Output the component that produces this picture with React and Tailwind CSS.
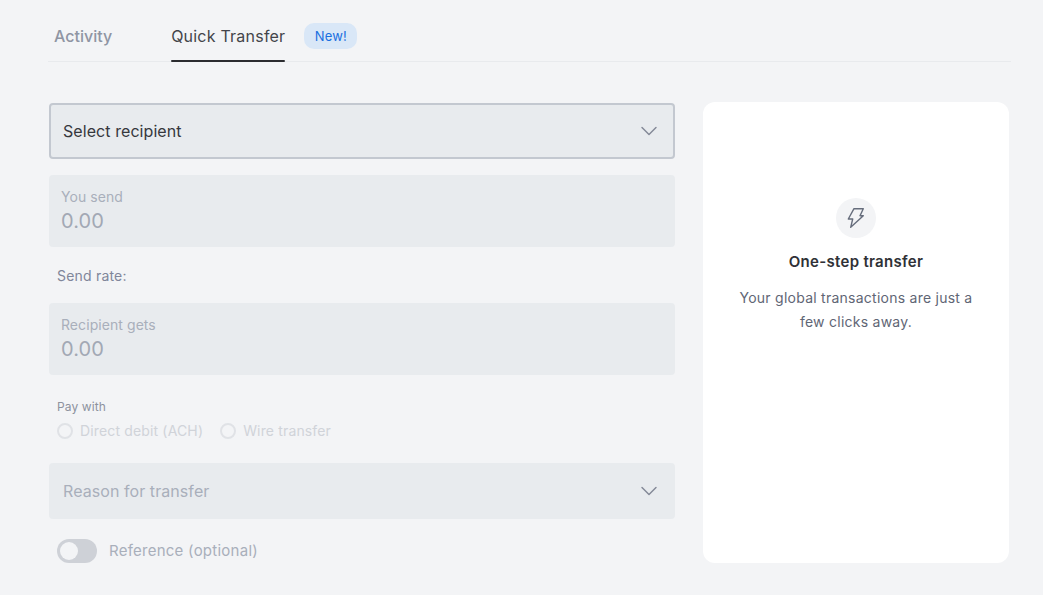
import { ChevronDown } from 'lucide-react';

function SelectBox({ label, active }) {
  return (
    <div
      className={`flex h-14 items-center justify-between rounded bg-[#e8ebee] ${
        active ? 'border-2 border-[#c3c8d0] pl-3 pr-[10px] text-[#36383d]' : 'pl-[14px] pr-3 text-[#a9afbb]'
      }`}
    >
      <span className="text-base leading-6 tracking-[0.07px]">{label}</span>
      <ChevronDown className="h-7 w-7 text-[#848a97]" strokeWidth={1.25} />
    </div>
  );
}

function AmountBox({ label }) {
  return (
    <div className="flex h-[72px] flex-col rounded bg-[#e8ebee] pl-3 pt-[13px]">
      <span className="text-sm leading-[18px] tracking-[0.07px] text-[#a9afbb]">{label}</span>
      <span className="mt-px text-xl leading-[28px] tracking-[0.1px] text-[#a2a8b4]">0.00</span>
    </div>
  );
}

function Radio({ label }) {
  return (
    <div className="flex items-center gap-[7px]">
      <span className="h-4 w-4 rounded-full border-2 border-[#e0e2e6]" />
      <span className="text-sm leading-5 tracking-[0.15px] text-[#d0d3d9]">{label}</span>
    </div>
  );
}

export default function App() {
  return (
    <div className="h-[595px] w-[1043px] overflow-hidden bg-[#f3f4f6] font-['Inter',sans-serif]">
      {/* Tabs */}
      <div className="ml-12 mr-8 flex h-[62px] items-stretch border-b border-[#e8eaed]">
        <div className="ml-[6px] flex items-center pt-[10px] text-base font-medium text-[#8f95a3]">Activity</div>
        <div className="relative ml-[59px] flex items-center pt-[10px] text-base tracking-[0.22px] text-[#43454a]">
          Quick Transfer
          <span className="absolute bottom-[-1px] left-0 right-0 h-[2px] rounded-full bg-[#2b2c30]" />
        </div>
        <div className="ml-[19px] flex items-center pt-[10px]">
          <span className="rounded-[10px] bg-[#d9e7f7] px-[10.5px] py-[3px] text-[13px] leading-[20px] tracking-[0.1px] text-[#1a6fe0]">New!</span>
        </div>
      </div>

      <div className="mt-10 ml-[49px] flex items-start">
        {/* Form */}
        <div className="flex w-[626px] flex-col">
          <div className="mt-px">
            <SelectBox label="Select recipient" active />
          </div>
          <div className="mt-4">
            <AmountBox label="You send" />
          </div>
          <div className="ml-2 mt-[19px] text-sm leading-5 tracking-[0.2px] text-[#80869a]">Send rate:</div>
          <div className="mt-[17px]">
            <AmountBox label="Recipient gets" />
          </div>
          <div className="ml-2 mt-6 text-xs leading-4 tracking-[0.1px] text-[#8d929e]">Pay with</div>
          <div className="ml-2 mt-[6px] flex gap-[17px]">
            <Radio label="Direct debit (ACH)" />
            <Radio label="Wire transfer" />
          </div>
          <div className="mt-[22px]">
            <SelectBox label="Reason for transfer" />
          </div>
          <div className="ml-2 mt-[20px] flex items-center gap-3">
            <div className="flex h-6 w-10 items-center rounded-full bg-[#ced1d7] pl-[3px]">
              <span className="h-[18px] w-[18px] rounded-full bg-[#f3f4f6]" />
            </div>
            <span className="text-[15px] leading-5 tracking-[0.25px] text-[#a9afbb]">Reference (optional)</span>
          </div>
        </div>

        {/* Info card */}
        <div className="ml-7 flex h-[461px] w-[306px] flex-col items-center rounded-xl bg-white pt-[96px] text-center">
          <div className="flex h-10 w-10 items-center justify-center rounded-full bg-[#f3f4f6]">
            <svg className="h-6 w-6" viewBox="0 0 24 24" fill="none" stroke="#666d7c" strokeWidth="1.4" strokeLinejoin="round">
              <path d="M10 2.700h9.300L16 9.700h3.300L6.700 21.300 8.700 13H4.300z" />
            </svg>
          </div>
          <div className="mt-[14px] text-[15px] font-semibold leading-5 tracking-[0.3px] text-[#2f3136]">One-step transfer</div>
          <div className="mt-[14px] w-[250px] text-sm leading-6 tracking-[0.25px] text-[#5f6675]">
            Your global transactions are just a few clicks away.
          </div>
        </div>
      </div>
    </div>
  );
}
